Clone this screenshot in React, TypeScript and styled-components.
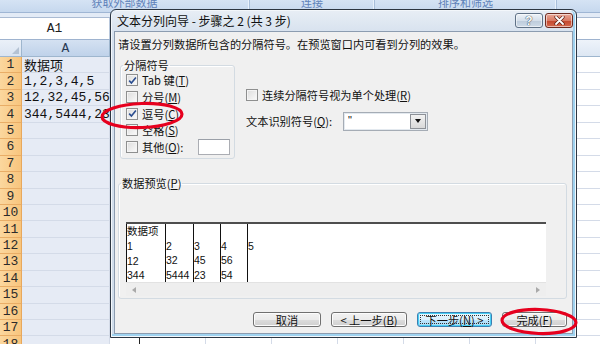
import React from "react";
import styled, { createGlobalStyle } from "styled-components";

const GlobalStyle = createGlobalStyle`
  *, *::before, *::after { box-sizing: border-box; }
  html, body { margin: 0; padding: 0; }
  body {
    width: 600px;
    height: 344px;
    overflow: hidden;
    background: #ffffff;
    font-family: "Noto Sans CJK SC", "Liberation Sans", sans-serif;
  }
`;

const ROW_H = 16.45;
const COLS = [88, 30, 66, 66, 66, 66, 66, 66, 66];
const CELL_A = ["数据项", "1,2,3,4,5", "12,32,45,56", "344,5444,23,54"];
const ROWS = Array.from({ length: 18 }, (_, i) => i + 1);

const PREVIEW = [
  { w: 39, lines: ["数据项", "1", "12", "344"] },
  { w: 28, lines: ["", "2", "32", "5444"] },
  { w: 27, lines: ["", "3", "45", "23"] },
  { w: 27, lines: ["", "4", "56", "54"] },
  { w: 0, lines: ["", "5", "", ""] },
];

/* ---------- spreadsheet behind the dialog ---------- */

const Page = styled.div`
  position: relative;
  width: 600px;
  height: 344px;
  overflow: hidden;
  display: flex;
  flex-direction: column;
`;

const Ribbon = styled.div`
  flex: none;
  display: flex;
  height: 13px;
  overflow: hidden;
  background: linear-gradient(#d5e3f4, #c6d8ee);
  border-bottom: 1px solid #9fb6d4;
`;

const RibbonGroup = styled.div<{ $w: number }>`
  flex: none;
  width: ${(p) => p.$w}px;
  display: flex;
  justify-content: center;
  border-right: 1px solid #a9bfda;
  box-shadow: inset -1px 0 0 #e9f1fb;
`;

const RibbonLabel = styled.span`
  margin-top: -5px;
  font-size: 11px;
  line-height: 14px;
  color: #5f82b9;
  white-space: nowrap;
`;

const Band = styled.div`
  flex: none;
  height: 5px;
  background: #e3ebf6;
  border-bottom: 1px solid #aabbd3;
`;

const FormulaBar = styled.div`
  flex: none;
  display: flex;
  height: 22px;
  background: #ffffff;
  border-bottom: 1px solid #9eb3cf;
`;

const NameBox = styled.div`
  width: 110px;
  display: flex;
  align-items: center;
  justify-content: center;
  font-family: "Liberation Mono", monospace;
  font-size: 13px;
  color: #1e1e1e;
  border-right: 1px solid #b9c8dc;
`;

const Sheet = styled.div`
  display: grid;
  grid-template-columns: 22px ${COLS.map((c) => `${c}px`).join(" ")};
  grid-template-rows: 17px;
  grid-auto-rows: ${ROW_H}px;
`;

const Corner = styled.div`
  position: relative;
  background: linear-gradient(#eaf0f8, #dae4f1);
  border-right: 1px solid #9eb6ce;
  border-bottom: 1px solid #9eb6ce;
  &::after {
    content: "";
    position: absolute;
    right: 2px;
    bottom: 2px;
    border-style: solid;
    border-width: 0 0 7px 7px;
    border-color: transparent transparent #b4c2d3 transparent;
  }
`;

const ColHeader = styled.div<{ $active?: boolean; $dark?: boolean }>`
  display: flex;
  align-items: center;
  justify-content: center;
  font-family: "Liberation Mono", monospace;
  font-size: 13px;
  color: #2a3a55;
  background: ${(p) =>
    p.$active ? "linear-gradient(#d4e1f2, #bfd2ea)" : "linear-gradient(#eef3fa, #dde7f3)"};
  border-right: 1px solid ${(p) => (p.$dark ? "#222" : "#9eb6ce")};
  border-bottom: 1px solid #9eb6ce;
`;

const RowHeader = styled.div`
  display: flex;
  align-items: center;
  justify-content: center;
  font-family: "Liberation Mono", monospace;
  font-size: 13px;
  color: #2b2b2b;
  background: linear-gradient(90deg, #fbd79e, #f8c57d);
  border-right: 1px solid #e8a85c;
  border-bottom: 1px solid #e9ad66;
`;

const Cell = styled.div<{ $active?: boolean; $dark?: boolean }>`
  padding-left: 2px;
  display: flex;
  align-items: center;
  white-space: nowrap;
  font-family: "Liberation Mono", "Noto Sans CJK SC", monospace;
  font-size: 13px;
  color: #111;
  background: ${(p) => (p.$active ? "#e6ebf5" : "#ffffff")};
  border-right: 1px solid ${(p) => (p.$dark ? "#222" : "#d4dbe8")};
  border-bottom: 1px solid #d4dbe8;
`;

/* ---------- dialog ---------- */

const Dialog = styled.div`
  position: absolute;
  left: 110px;
  top: 9px;
  width: 467px;
  height: 329px;
  display: flex;
  flex-direction: column;
  border: 1px solid #2c3642;
  border-radius: 6px 6px 0 0;
  background: linear-gradient(#e8eef5, #d6e1ee 24px, #cfdcea);
  box-shadow: inset 0 0 0 1px #f3f7fb, inset -1px -1px 0 2px #9fd3f0;
  font-size: 11.2px;
  color: #111;
`;

const TitleBar = styled.div`
  flex: none;
  height: 21px;
  display: flex;
  align-items: center;
  padding: 0 3px 0 6px;
`;

const Title = styled.div`
  flex: 1;
  font-size: 12px;
  color: #101010;
  white-space: nowrap;
`;

const CaptionButton = styled.div<{ $close?: boolean }>`
  width: 28px;
  height: 15px;
  margin-left: 2px;
  display: flex;
  align-items: center;
  justify-content: center;
  border: 1px solid ${(p) => (p.$close ? "#6d2a20" : "#5f7186")};
  border-radius: 3px;
  background: ${(p) =>
    p.$close
      ? "linear-gradient(#e8a797, #d97a64 50%, #c3452c 51%, #d4684d)"
      : "linear-gradient(#eef3f8, #d5dfea 50%, #bccbdb 51%, #cfdbe7)"};
  box-shadow: inset 0 0 0 1px rgba(255, 255, 255, 0.55);
  color: #fff;
  font-family: "Liberation Sans", sans-serif;
  font-weight: bold;
  font-size: 12px;
  line-height: 1;
  text-shadow: 0 0 1px #2a3848, 0 0 1px #2a3848;
`;

const Client = styled.div`
  flex: 1;
  margin: 0 3px 3px 3px;
  border: 1px solid #8c9cb0;
  background: #f0f0f0;
  display: flex;
  flex-direction: column;
  padding: 0 5px 0 3px;
`;

const Intro = styled.div`
  margin-top: 5px;
  line-height: 14px;
  white-space: nowrap;
`;

const TopSection = styled.div`
  margin-top: 7px;
  display: flex;
  align-items: flex-start;
`;

const GroupBox = styled.fieldset<{ $w?: number }>`
  margin: 0 0 0 ${(p) => (p.$w ? 2 : 0)}px;
  padding: 0;
  width: ${(p) => (p.$w ? `${p.$w}px` : "auto")};
  min-width: 0;
  border: 1px solid #d3dbe2;
  border-radius: 3px;
  box-shadow: inset 1px 1px 0 #fff;
`;

const Legend = styled.legend`
  margin-left: 2px;
  padding: 0 1px;
  line-height: 14px;
  font-size: 11.2px;
  white-space: nowrap;
`;

const DelimList = styled.div`
  display: flex;
  flex-direction: column;
  padding: 0 4px 3px 5px;
`;

const OptionRow = styled.div<{ $h?: number }>`
  height: ${(p) => p.$h ?? 16.7}px;
  display: flex;
  align-items: center;
  white-space: nowrap;
`;

const Box = styled.span`
  flex: none;
  width: 12px;
  height: 12px;
  margin-right: 4px;
  border: 1px solid #8e8f8f;
  background: linear-gradient(135deg, #dcdcdc, #fbfbfb);
  box-shadow: inset 0 0 0 1px #f4f4f4;
  display: flex;
  align-items: center;
  justify-content: center;
`;

const Acc = styled.u`
  text-decoration-thickness: 1px;
  text-underline-offset: 1px;
`;

const TextBox = styled.span`
  margin-left: auto;
  width: 32px;
  height: 16px;
  background: #fff;
  border: 1px solid #abadb3;
  border-top-color: #9ba0a8;
`;

const RightColumn = styled.div`
  margin-left: 11px;
  padding-top: 30px;
  display: flex;
  flex-direction: column;
`;

const QualifierRow = styled.div`
  margin-top: 9px;
  height: 20px;
  display: flex;
  align-items: center;
  white-space: nowrap;
`;

const QualifierLabel = styled.span`
  width: 97px;
`;

const Select = styled.div`
  width: 85px;
  height: 19px;
  display: flex;
  background: #fff;
  border: 1px solid #a5acb5;
  box-shadow: inset 0 0 0 1px #e3e9ef;
`;

const SelectValue = styled.span`
  flex: 1;
  padding: 0 4px;
  line-height: 15px;
  font-family: "Liberation Sans", sans-serif;
  font-size: 11px;
`;

const SelectArrow = styled.span`
  width: 16px;
  margin: 1px;
  display: flex;
  align-items: center;
  justify-content: center;
  border: 1px solid #8d9197;
  background: linear-gradient(#f2f2f2, #d9d9d9);
  &::after {
    content: "";
    border-style: solid;
    border-width: 4px 3.5px 0 3.5px;
    border-color: #111 transparent transparent transparent;
  }
`;

const PreviewGroup = styled(GroupBox)`
  margin: 17px 0 0 0;
`;

const PreviewPane = styled.div`
  margin: 32px 0 2px 7px;
  width: 420px;
  display: flex;
  flex-direction: column;
`;

const PreviewTable = styled.div`
  height: 60px;
  display: flex;
  background: #fff;
  border-top: 2px solid #4e4e4e;
  font-family: "Liberation Sans", "Noto Sans CJK SC", sans-serif;
  font-size: 10.5px;
  color: #111;
`;

const PreviewColumn = styled.div<{ $w: number }>`
  ${(p) => (p.$w ? `width: ${p.$w}px; flex: none;` : "flex: 1;")}
  border-left: 1px solid #111;
  display: flex;
  flex-direction: column;
`;

const PreviewLine = styled.span`
  height: 14.6px;
  line-height: 14.6px;
  white-space: nowrap;
`;

const HScroll = styled.div`
  height: 14px;
  display: flex;
  align-items: center;
  justify-content: space-between;
  padding: 0 6px;
  background: #eeeeee;
  border-top: 1px solid #e2e2e2;
`;

const ScrollArrow = styled.span<{ $right?: boolean }>`
  border-style: solid;
  border-width: 3px ${(p) => (p.$right ? "0 3px 4px" : "4px 3px 0")};
  border-color: transparent;
  ${(p) => (p.$right ? "border-left-color: #a9a9a9;" : "border-right-color: #a9a9a9;")}
`;

const ButtonRow = styled.div`
  margin-top: 13px;
  display: flex;
  justify-content: flex-end;
  gap: 10px;
`;

const Button = styled.div<{ $w: number; $focus?: boolean }>`
  width: ${(p) => p.$w}px;
  height: 15px;
  display: flex;
  align-items: center;
  justify-content: center;
  white-space: nowrap;
  font-size: 11.2px;
  border: 1px solid ${(p) => (p.$focus ? "#3c7fb1" : "#707070")};
  border-radius: 3px;
  background: ${(p) =>
    p.$focus
      ? "linear-gradient(#eaf6fd, #d9f0fc 50%, #bee6fd 51%, #a7d9f5)"
      : "linear-gradient(#f2f2f2, #ebebeb 50%, #dddddd 51%, #cfcfcf)"};
  box-shadow: inset 0 0 0 1px ${(p) => (p.$focus ? "#48d0f5" : "#fcfcfc")};
  outline: ${(p) => (p.$focus ? "1px dotted #333" : "none")};
  outline-offset: -4px;
`;

const Annotations = styled.svg`
  position: absolute;
  left: 0;
  top: 0;
  pointer-events: none;
`;

const Check = () => (
  <svg width="9" height="9" viewBox="0 0 9 9">
    <path d="M1.2 4.6 L3.4 7 L7.9 1.4" fill="none" stroke="#2a4d8f" strokeWidth="1.6" />
  </svg>
);

const CheckOption = ({ checked, children }: { checked?: boolean; children: React.ReactNode }) => (
  <>
    <Box>{checked && <Check />}</Box>
    <span>{children}</span>
  </>
);

export default function App() {
  return (
    <Page>
      <GlobalStyle />
      <Ribbon>
        <RibbonGroup $w={250}>
          <RibbonLabel>获取外部数据</RibbonLabel>
        </RibbonGroup>
        <RibbonGroup $w={125}>
          <RibbonLabel>连接</RibbonLabel>
        </RibbonGroup>
        <RibbonGroup $w={182}>
          <RibbonLabel>排序和筛选</RibbonLabel>
        </RibbonGroup>
      </Ribbon>
      <Band />
      <FormulaBar>
        <NameBox>A1</NameBox>
      </FormulaBar>
      <Sheet>
        <Corner />
        {COLS.map((_, i) => (
          <ColHeader key={i} $active={i === 0} $dark={i === 1}>
            {i === 0 ? "A" : ""}
          </ColHeader>
        ))}
        {ROWS.map((r) => (
          <React.Fragment key={r}>
            <RowHeader>{r}</RowHeader>
            {COLS.map((_, c) => (
              <Cell key={c} $active={c === 0} $dark={c === 1}>
                {c === 0 ? CELL_A[r - 1] ?? "" : ""}
              </Cell>
            ))}
          </React.Fragment>
        ))}
      </Sheet>

      <Dialog>
        <TitleBar>
          <Title>文本分列向导 - 步骤之 2 (共 3 步)</Title>
          <CaptionButton>?</CaptionButton>
          <CaptionButton $close>
            <svg width="11" height="9" viewBox="0 0 11 9">
              <path d="M2 1 L9 8 M9 1 L2 8" stroke="#5a1d12" strokeWidth="3.2" strokeLinecap="round" />
              <path d="M2 1 L9 8 M9 1 L2 8" stroke="#ffffff" strokeWidth="1.8" strokeLinecap="round" />
            </svg>
          </CaptionButton>
        </TitleBar>
        <Client>
          <Intro>请设置分列数据所包含的分隔符号。在预览窗口内可看到分列的效果。</Intro>
          <TopSection>
            <GroupBox $w={115}>
              <Legend>分隔符号</Legend>
              <DelimList>
                <OptionRow>
                  <CheckOption checked>
                    Tab 键(<Acc>T</Acc>)
                  </CheckOption>
                </OptionRow>
                <OptionRow>
                  <CheckOption>
                    分号(<Acc>M</Acc>)
                  </CheckOption>
                </OptionRow>
                <OptionRow>
                  <CheckOption checked>
                    逗号(<Acc>C</Acc>)
                  </CheckOption>
                </OptionRow>
                <OptionRow>
                  <CheckOption>
                    空格(<Acc>S</Acc>)
                  </CheckOption>
                </OptionRow>
                <OptionRow>
                  <CheckOption>
                    其他(<Acc>O</Acc>):
                  </CheckOption>
                  <TextBox />
                </OptionRow>
              </DelimList>
            </GroupBox>
            <RightColumn>
              <OptionRow $h={14}>
                <CheckOption>
                  连续分隔符号视为单个处理(<Acc>R</Acc>)
                </CheckOption>
              </OptionRow>
              <QualifierRow>
                <QualifierLabel>
                  文本识别符号(<Acc>Q</Acc>):
                </QualifierLabel>
                <Select>
                  <SelectValue>"</SelectValue>
                  <SelectArrow />
                </Select>
              </QualifierRow>
            </RightColumn>
          </TopSection>

          <PreviewGroup>
            <Legend>
              数据预览(<Acc>P</Acc>)
            </Legend>
            <PreviewPane>
              <PreviewTable>
                {PREVIEW.map((col, i) => (
                  <PreviewColumn key={i} $w={col.w}>
                    {col.lines.map((t, j) => (
                      <PreviewLine key={j}>{t}</PreviewLine>
                    ))}
                  </PreviewColumn>
                ))}
              </PreviewTable>
              <HScroll>
                <ScrollArrow />
                <ScrollArrow $right />
              </HScroll>
            </PreviewPane>
          </PreviewGroup>

          <ButtonRow>
            <Button $w={68}>取消</Button>
            <Button $w={76}>
              &lt; 上一步(<Acc>B</Acc>)
            </Button>
            <Button $w={75} $focus>
              下一步(<Acc>N</Acc>) &gt;
            </Button>
            <Button $w={65}>
              完成(<Acc>F</Acc>)
            </Button>
          </ButtonRow>
        </Client>
      </Dialog>

      <Annotations width="600" height="344" viewBox="0 0 600 344">
        <ellipse cx="142" cy="115.5" rx="40" ry="12" fill="none" stroke="#e6001e" strokeWidth="3.2" transform="rotate(-2 142 115.5)" />
        <ellipse cx="539" cy="321.5" rx="37" ry="12" fill="none" stroke="#e6001e" strokeWidth="3.2" transform="rotate(2 539 321.5)" />
      </Annotations>
    </Page>
  );
}
